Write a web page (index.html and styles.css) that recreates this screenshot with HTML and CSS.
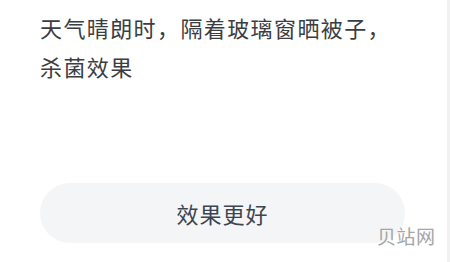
FILE: index.html
```html
<!DOCTYPE html>
<html>
	<head>
		<meta charset="utf-8">
		<title></title>
		<link rel="stylesheet" href="styles.css">
	</head>
	<body>
		<div class="page">
			<p class="question">天气晴朗时，隔着玻璃窗晒被子，<br>杀菌效果</p>
			<div class="option">效果更好</div>
			<span class="mark">贝站网</span>
		</div>
	</body>
</html>
```

FILE: styles.css
```css
* {
	margin: 0;
	padding: 0;
}

body {
	background-color: #fff;
	font-family: "Noto Sans CJK SC", "Noto Sans", sans-serif;
}

.page {
	position: relative;
	height: 262px;
	padding: 8px 0 0 40px;
	box-sizing: border-box;
	border-right: 3px solid #f1f1f1;
}

.question {
	font-size: 22px;
	line-height: 39px;
	letter-spacing: 1.4px;
	color: #3a3d42;
}

.option {
	margin-top: 97px;
	width: 365px;
	height: 60px;
	line-height: 60px;
	border-radius: 30px;
	background-color: #f3f5f7;
	text-align: center;
	font-size: 22px;
	letter-spacing: 1px;
	color: #3d4550;
}

.mark {
	position: absolute;
	left: 377px;
	top: 222px;
	font-size: 19px;
	letter-spacing: 0.5px;
	color: #a5a5a5;
}
```
